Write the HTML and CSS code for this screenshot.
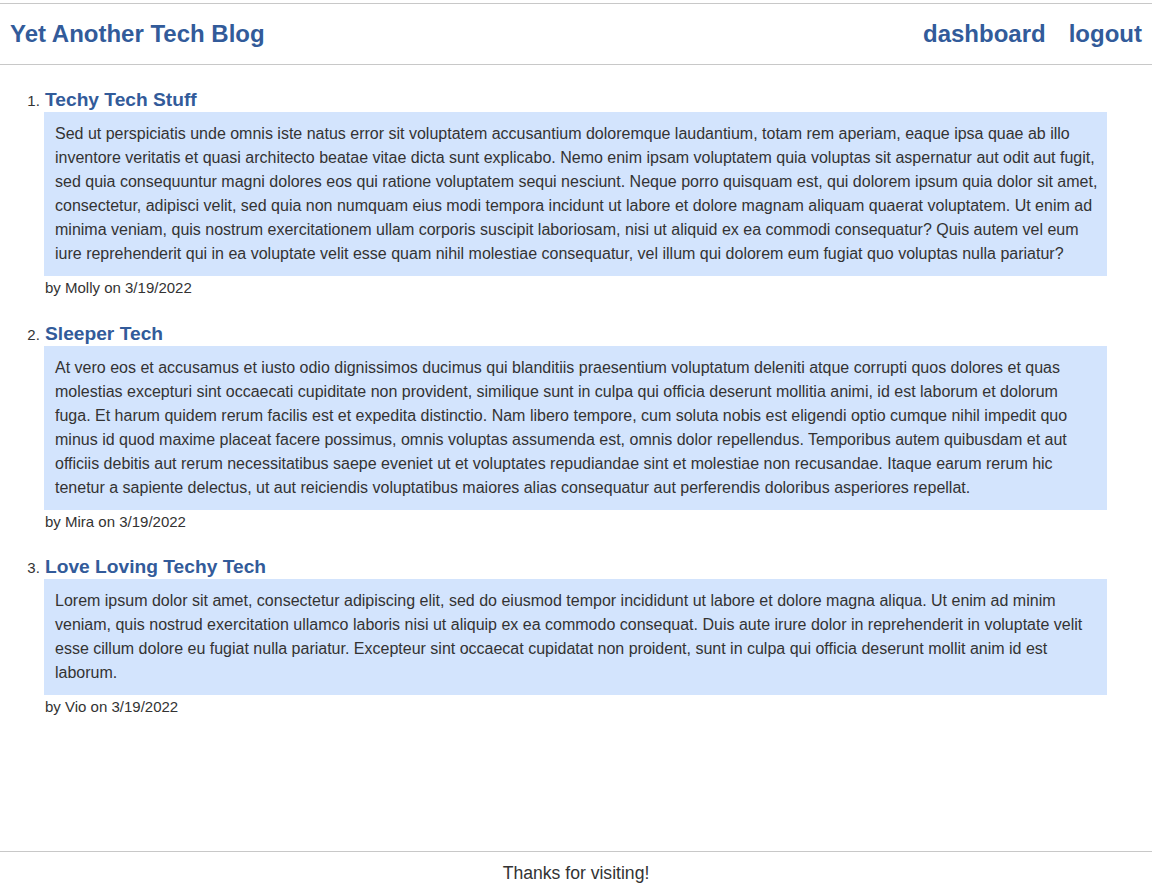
FILE: index.html
```html
<!DOCTYPE html>
<html lang="en">
<head>
<meta charset="utf-8">
<title>Yet Another Tech Blog</title>
<link rel="stylesheet" href="styles.css">
</head>
<body>
<div class="page">
  <header class="site-header">
    <a class="brand" href="#">Yet Another Tech Blog</a>
    <nav class="nav">
      <a href="#">dashboard</a>
      <a href="#">logout</a>
    </nav>
  </header>
  <main class="main">
    <ol class="posts">
      <li class="post">
        <h2 class="post-title"><a href="#">Techy Tech Stuff</a></h2>
        <p class="post-body">Sed ut perspiciatis unde omnis iste natus error sit voluptatem accusantium doloremque laudantium, totam rem aperiam, eaque ipsa quae ab illo inventore veritatis et quasi architecto beatae vitae dicta sunt explicabo. Nemo enim ipsam voluptatem quia voluptas sit aspernatur aut odit aut fugit, sed quia consequuntur magni dolores eos qui ratione voluptatem sequi nesciunt. Neque porro quisquam est, qui dolorem ipsum quia dolor sit amet, consectetur, adipisci velit, sed quia non numquam eius modi tempora incidunt ut labore et dolore magnam aliquam quaerat voluptatem. Ut enim ad minima veniam, quis nostrum exercitationem ullam corporis suscipit laboriosam, nisi ut aliquid ex ea commodi consequatur? Quis autem vel eum iure reprehenderit qui in ea voluptate velit esse quam nihil molestiae consequatur, vel illum qui dolorem eum fugiat quo voluptas nulla pariatur?</p>
        <p class="post-meta">by Molly on 3/19/2022</p>
      </li>
      <li class="post">
        <h2 class="post-title"><a href="#">Sleeper Tech</a></h2>
        <p class="post-body">At vero eos et accusamus et iusto odio dignissimos ducimus qui blanditiis praesentium voluptatum deleniti atque corrupti quos dolores et quas molestias excepturi sint occaecati cupiditate non provident, similique sunt in culpa qui officia deserunt mollitia animi, id est laborum et dolorum fuga. Et harum quidem rerum facilis est et expedita distinctio. Nam libero tempore, cum soluta nobis est eligendi optio cumque nihil impedit quo minus id quod maxime placeat facere possimus, omnis voluptas assumenda est, omnis dolor repellendus. Temporibus autem quibusdam et aut officiis debitis aut rerum necessitatibus saepe eveniet ut et voluptates repudiandae sint et molestiae non recusandae. Itaque earum rerum hic tenetur a sapiente delectus, ut aut reiciendis voluptatibus maiores alias consequatur aut perferendis doloribus asperiores repellat.</p>
        <p class="post-meta">by Mira on 3/19/2022</p>
      </li>
      <li class="post">
        <h2 class="post-title"><a href="#">Love Loving Techy Tech</a></h2>
        <p class="post-body">Lorem ipsum dolor sit amet, consectetur adipiscing elit, sed do eiusmod tempor incididunt ut labore et dolore magna aliqua. Ut enim ad minim veniam, quis nostrud exercitation ullamco laboris nisi ut aliquip ex ea commodo consequat. Duis aute irure dolor in reprehenderit in voluptate velit esse cillum dolore eu fugiat nulla pariatur. Excepteur sint occaecat cupidatat non proident, sunt in culpa qui officia deserunt mollit anim id est laborum.</p>
        <p class="post-meta">by Vio on 3/19/2022</p>
      </li>
    </ol>
  </main>
  <footer class="site-footer">Thanks for visiting!</footer>
</div>
</body>
</html>
```

FILE: styles.css
```css
html, body {
  margin: 0;
  padding: 0;
}

body {
  font-family: "Liberation Sans", Arial, sans-serif;
  color: #333333;
  background: #ffffff;
}

.page {
  display: flex;
  flex-direction: column;
  min-height: 100vh;
  box-sizing: border-box;
  padding-top: 3px;
}

a {
  color: #325b9a;
  text-decoration: none;
}

.site-header {
  display: flex;
  justify-content: space-between;
  align-items: center;
  height: 60px;
  padding: 0 10px 0 10px;
  border-top: 1px solid #c8c8c8;
  border-bottom: 1px solid #c8c8c8;
}

.brand {
  font-size: 24px;
  font-weight: bold;
}

.nav {
  display: flex;
  gap: 23px;
}

.nav a {
  font-size: 24px;
  font-weight: bold;
}

.main {
  flex: 1;
}

.posts {
  margin: 0;
  padding: 24px 45px 20px 44px;
  font-size: 15px;
}

.post {
  margin-bottom: 25.5px;
}

.post-title {
  margin: 0 0 1px 1px;
  font-size: 19.2px;
  line-height: 22px;
  font-weight: bold;
}

.post-body {
  margin: 0;
  padding: 10px 9.5px 10px 11px;
  background: #d3e4fd;
  font-size: 16px;
  line-height: 24px;
}

.post-meta {
  margin: 3px 0 0 1px;
  font-size: 15px;
  line-height: 18px;
}

.site-footer {
  border-top: 1px solid #c8c8c8;
  height: 40px;
  padding: 11px 0 0;
  box-sizing: border-box;
  text-align: center;
  font-size: 17.6px;
  line-height: 21px;
}
```
